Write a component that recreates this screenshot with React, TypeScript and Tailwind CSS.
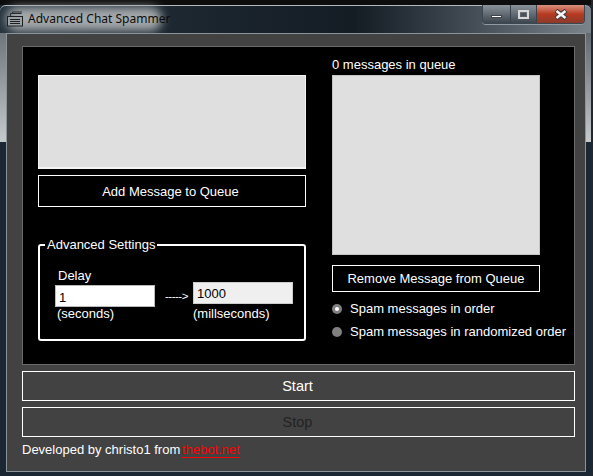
import React from "react";

const font = "font-['Liberation_Sans',Arial,sans-serif]";

const CaptionButtons = () => (
  <div className="absolute left-[482px] top-[5px] flex h-[19px] w-[103px] overflow-hidden rounded-b-[4px] border border-t-0 border-[#3c4650] shadow-[0_1px_0_#8f9aa3]">
    <div className="flex w-[28px] items-center justify-center border-r border-[#39424b] bg-gradient-to-b from-[#8b939a] via-[#636c74] to-[#3d464e]">
      <div className="mt-[5px] h-[3px] w-[11px] border border-[#444] bg-white" />
    </div>
    <div className="flex w-[26px] items-center justify-center border-r border-[#39424b] bg-gradient-to-b from-[#8b939a] via-[#636c74] to-[#3d464e]">
      <div className="flex h-[9px] w-[11px] items-center justify-center border-2 border-[#d8d8d8]">
        <div className="h-[3px] w-[5px] bg-[#4a525a]" />
      </div>
    </div>
    <div className="flex flex-1 items-center justify-center bg-gradient-to-b from-[#d8907f] via-[#b8391f] to-[#8c3a2a]">
      <svg width="14" height="11" viewBox="0 0 14 11">
        <path d="M2 1.5 L12 9.5 M12 1.5 L2 9.5" stroke="#3a3a3a" strokeWidth="4.5" />
        <path d="M2.5 2 L11.5 9 M11.5 2 L2.5 9" stroke="#f4f4f4" strokeWidth="2.6" />
      </svg>
    </div>
  </div>
);

const AppIcon = () => (
  <svg className="absolute left-[7px] top-[11px]" width="17" height="16" viewBox="0 0 17 16" fill="none">
    <path d="M3.5 5 V2.5 H14.5 M5.5 3 V1 H15" stroke="#2a2f33" strokeWidth="1" />
    <rect x="0.5" y="5.5" width="15" height="9.5" fill="#9ba1a5" stroke="#1c1f22" />
    <path d="M3 8.5 H13 M3 10.5 H13 M3 12.5 H13" stroke="#1c1f22" />
  </svg>
);

const Radio = ({ checked, label }: { checked?: boolean; label: string }) => (
  <div className="flex h-[23px] items-center">
    <div className="flex h-[10px] w-[10px] items-center justify-center rounded-full bg-[#808080]">
      {checked && <div className="h-[4px] w-[4px] rounded-full bg-white" />}
    </div>
    <span className="ml-[8px] whitespace-nowrap text-white">{label}</span>
  </div>
);

const App = () => {
  return (
    <div className={`relative h-[476px] w-[593px] overflow-hidden bg-[#1b2732] text-[13px] leading-[15px] ${font}`}>
      {/* Window frame */}
      <div className="absolute left-0 top-0 h-[5px] w-full bg-[#0d0d0d]" />
      <div className="absolute bottom-0 right-0 top-0 w-[2px] bg-[#23272b]" />
      <div className="absolute left-0 top-[5px] h-[137px] w-[6px] rounded-tl-[6px] bg-gradient-to-b from-[#596168] to-[#c6cacd]" />
      <div className="absolute left-[585px] top-[24px] h-[118px] w-[6px] bg-gradient-to-b from-[#596168] to-[#c6cacd]" />
      <div className="absolute left-0 top-[5px] h-[28px] w-[591px] rounded-t-[6px] border-t border-[#b4bbc0] bg-gradient-to-r from-[#26333e] via-[#141c24] via-60% to-[#7b848b]" />
      <div className="absolute left-[6px] top-[7px] h-[24px] w-[156px] rounded-[12px] bg-[#a3a8ab] blur-[5px]" />
      <AppIcon />
      <span className="absolute left-[28px] top-[11px] font-['Noto_Sans',sans-serif] text-[12px] leading-[16px] text-[#0b0b0b]">
        Advanced Chat Spammer
      </span>
      <CaptionButtons />

      {/* Client area */}
      <div className="absolute left-[6px] top-[33px] flex h-[439px] w-[580px] flex-col border border-[#8b949b] bg-[#424242] px-[15px] pt-[12px]">
        <div className="flex h-[319px] w-[553px] border border-[#6a6a6a] bg-black pl-[15px]">
          {/* Left column */}
          <div className="flex w-[268px] flex-col pt-[28px]">
            <div className="h-[94px] border border-b-2 border-[#f4f4f4] bg-[#dfdfdf]" />
            <button className="mt-[6px] h-[32px] border border-white pr-[3px] text-white">Add Message to Queue</button>
            <fieldset className="relative mt-[31px] h-[103px] rounded-[3px] border-2 border-white pl-[15px]">
              <legend className="-ml-[10px] px-[2px] leading-[14px] text-white">Advanced Settings</legend>
              <div className="ml-[3px] mt-[16px] text-white">Delay</div>
              <div className="mt-[2px] flex">
                <div className="flex h-[22px] w-[100px] items-center border border-[#bbb] bg-white pl-[3px] pt-[2px] text-black">1</div>
                <div className="ml-[10px] w-[28px] text-[11.5px] leading-[22px] tracking-[-0.5px] text-white">-----&gt;</div>
                <div className="-mt-[3px] flex h-[22px] w-[100px] items-center border border-[#ccc] bg-[#efefef] pl-[3px] text-black">1000</div>
              </div>
              <div className="-mt-[1px] flex text-white">
                <span className="ml-[2px] w-[136px]">(seconds)</span>
                <span>(millseconds)</span>
              </div>
            </fieldset>
          </div>

          {/* Right column */}
          <div className="ml-[26px] flex w-[240px] flex-col pt-[10px]">
            <div className="text-white">0 messages in queue</div>
            <div className="mt-[3px] h-[180px] w-[208px] border border-[#c4c4c4] bg-[#dfdfdf]" />
            <button className="mt-[10px] h-[27px] w-[208px] border border-white text-white">Remove Message from Queue</button>
            <div className="mt-[5px]">
              <Radio checked label="Spam messages in order" />
              <Radio label="Spam messages in randomized order" />
            </div>
          </div>
        </div>

        <button className="mt-[6px] h-[30px] w-[553px] border border-white pr-[2px] text-[14.5px] text-white">Start</button>
        <button className="mt-[6px] h-[30px] w-[553px] border border-white pr-[2px] text-[14.5px] text-[#222]">Stop</button>
        <div className="mt-[5px] text-white">
          Developed by christo1 from <a className="-ml-[2px] border-b border-[#ff0000] text-[#ff0000]">thebot.net</a>
        </div>
      </div>
    </div>
  );
};

export default App;
